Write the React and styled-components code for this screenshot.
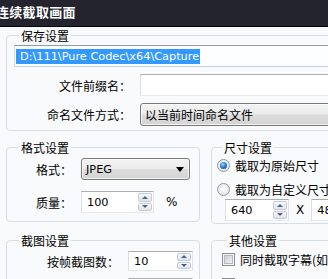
import React from "react";
import styled, { createGlobalStyle } from "styled-components";

const Global = createGlobalStyle`
  html, body { margin: 0; padding: 0; background: #f8fafb; }
  body { font-family: "Noto Sans CJK SC", "Noto Sans", sans-serif; }
`;

const Root = styled.div`
  width: 328px;
  height: 279px;
  overflow: hidden;
  background: #f8fafb;
`;

const Inner = styled.div`
  width: 420px;
  display: flex;
  flex-direction: column;
`;

const TitleBar = styled.div`
  height: 26px;
  background: #23242e;
  border-bottom: 1px solid #050506;
  display: flex;
  align-items: center;
`;

const Title = styled.div`
  margin-left: -4px;
  margin-top: -2px;
  color: #ffffff;
  font-weight: bold;
  font-size: 13px;
  letter-spacing: 0.3px;
  line-height: 16px;
`;

const Body = styled.div`
  padding: 1px 0 0 6px;
  display: flex;
  flex-direction: column;
  gap: 9px;
`;

const Group = styled.fieldset`
  margin: 0;
  padding: ${(p) => p.$pad || "2px 7px 4px 7px"};
  border: 1px solid #d5dfe5;
  border-radius: 4px;
  min-width: 0;
  box-sizing: border-box;
  display: flex;
  flex-direction: column;
  gap: ${(p) => p.$gap || 8}px;
`;

const Legend = styled.legend`
  margin-left: 5px;
  padding: 0 2px;
  font-size: 12px;
  line-height: 15px;
  color: #000;
`;

const Columns = styled.div`
  display: grid;
  grid-template-columns: 194px 1fr;
  column-gap: 11px;
  row-gap: 9px;
  align-items: start;
`;

const Row = styled.div`
  display: grid;
  grid-template-columns: ${(p) => p.$label}px auto auto;
  column-gap: 9px;
  align-items: center;
  justify-content: start;
`;

const Label = styled.span`
  font-size: 12px;
  line-height: 15px;
  text-align: right;
  color: #000;
  white-space: nowrap;
`;

const TextBox = styled.div`
  box-sizing: border-box;
  height: 22px;
  width: ${(p) => (p.$w ? `${p.$w}px` : "100%")};
  background: #fdfeff;
  border: 1px solid;
  border-color: #8e9cab #d6dee6 #c4d2de #d6dee6;
  display: flex;
  align-items: center;
  padding-left: 1px;
  font-family: "DejaVu Sans", sans-serif;
  font-size: 11.3px;
  color: #000;
  white-space: nowrap;
  overflow: hidden;
`;

const PlainBox = styled(TextBox)`
  border-color: #abadb3 #e2e3ea #e3e9ef #dbdfe6;
  background: #ffffff;
`;

const Selected = styled.span`
  background: #3399ff;
  color: #ffffff;
  padding: 1px 1px 1px 4px;
  line-height: 13px;
`;

const DropButton = styled.div`
  box-sizing: border-box;
  height: ${(p) => p.$h || 22}px;
  width: ${(p) => (p.$w ? `${p.$w}px` : "260px")};
  border: 1px solid #7a7a7a;
  border-radius: 3px;
  background: linear-gradient(#f3f3f3 0%, #ebebeb 48%, #dddddd 52%, #d3d3d3 100%);
  box-shadow: inset 0 0 0 1px rgba(255, 255, 255, 0.7);
  display: flex;
  align-items: center;
  justify-content: space-between;
  padding: 0 5px 0 4px;
  font-size: ${(p) => (p.$latin ? "11.3px" : "12px")};
  font-family: ${(p) =>
    p.$latin ? '"DejaVu Sans", sans-serif' : '"Noto Sans CJK SC", sans-serif'};
  color: #000;
  white-space: nowrap;
`;

const Arrow = styled.span`
  width: 0;
  height: 0;
  border-left: 4px solid transparent;
  border-right: 4px solid transparent;
  border-top: 5px solid #000;
  margin-top: 1px;
`;

const SpinField = styled.div`
  box-sizing: border-box;
  height: ${(p) => p.$h}px;
  width: ${(p) => p.$w}px;
  background: #ffffff;
  border: 1px solid;
  border-color: #abadb3 #e2e3ea #e3e9ef #dbdfe6;
  display: flex;
  align-items: center;
  justify-content: space-between;
  padding: 1px 1px 1px 5px;
  font-family: "DejaVu Sans", sans-serif;
  font-size: 11.3px;
  color: #000;
`;

const Spinner = styled.div`
  width: 14px;
  height: 100%;
  display: flex;
  flex-direction: column;
  gap: 1px;
`;

const SpinHalf = styled.div`
  flex: 1;
  border: 1px solid #c3ccd6;
  border-radius: 2px;
  background: linear-gradient(#f6f8fb, #dde4ec);
  display: flex;
  align-items: center;
  justify-content: center;
  &::after {
    content: "";
    width: 0;
    height: 0;
    border-left: 3px solid transparent;
    border-right: 3px solid transparent;
    ${(p) =>
      p.$up
        ? "border-bottom: 3px solid #4d6185;"
        : "border-top: 3px solid #4d6185;"}
  }
`;

const Unit = styled.span`
  font-family: "DejaVu Sans", sans-serif;
  font-size: 12px;
  color: #000;
  margin-left: 3px;
`;

const OptionRow = styled.div`
  display: flex;
  align-items: center;
  gap: 5px;
  font-size: 12px;
  line-height: 15px;
  color: #000;
  white-space: nowrap;
`;

const Radio = styled.span`
  box-sizing: border-box;
  width: 13px;
  height: 13px;
  border-radius: 50%;
  border: 1px solid #8d98a6;
  background: radial-gradient(circle at 50% 40%, #ffffff 0%, #e8ecf0 60%, #c9d0d8 100%);
  display: flex;
  align-items: center;
  justify-content: center;
  &::after {
    content: "";
    display: ${(p) => (p.$on ? "block" : "none")};
    width: 7px;
    height: 7px;
    border-radius: 50%;
    background: radial-gradient(circle at 40% 35%, #9fd6ff 0%, #2d7fc8 45%, #0d3f78 100%);
  }
`;

const Check = styled.span`
  box-sizing: border-box;
  width: 13px;
  height: 13px;
  border: 1px solid #8e8f8f;
  background: #f4f4f4;
  display: flex;
  align-items: center;
  justify-content: center;
  &::after {
    content: "";
    width: 9px;
    height: 9px;
    background: linear-gradient(135deg, #cbcfd5, #f0f1f3);
    border: 1px solid #b6bbc2;
    box-sizing: border-box;
  }
`;

const SizeRow = styled.div`
  display: flex;
  align-items: center;
  gap: 7px;
  padding-left: 8px;
  margin-top: -7px;
  font-family: "DejaVu Sans", sans-serif;
  font-size: 12px;
`;

function Spin({ w, h = 22, value }) {
  return (
    <SpinField $w={w} $h={h}>
      <span>{value}</span>
      <Spinner>
        <SpinHalf $up />
        <SpinHalf />
      </Spinner>
    </SpinField>
  );
}

export default function App() {
  return (
    <Root>
      <Global />
      <Inner>
        <TitleBar>
          <Title>连续截取画面</Title>
        </TitleBar>
        <Body>
          <Group $pad="2px 7px 4px 7px" $gap={7}>
            <Legend>保存设置</Legend>
            <TextBox>
              <Selected>D:\111\Pure Codec\x64\Capture</Selected>
            </TextBox>
            <Row $label={117}>
              <Label>文件前缀名：</Label>
              <PlainBox $w={260} />
            </Row>
            <Row $label={117}>
              <Label>命名文件方式：</Label>
              <DropButton $h={23}>以当前时间命名文件</DropButton>
            </Row>
          </Group>
          <Columns>
            <Group $pad="3px 7px 8px 7px" $gap={11}>
              <Legend>格式设置</Legend>
              <Row $label={58}>
                <Label>格式：</Label>
                <DropButton $w={109} $latin>
                  <span>JPEG</span>
                  <Arrow />
                </DropButton>
              </Row>
              <Row $label={58}>
                <Label>质量：</Label>
                <Spin w={73} value="100" />
                <Unit>%</Unit>
              </Row>
            </Group>
            <Group $pad="3px 7px 2px 5px" $gap={9}>
              <Legend>尺寸设置</Legend>
              <OptionRow>
                <Radio $on />
                截取为原始尺寸
              </OptionRow>
              <OptionRow>
                <Radio />
                截取为自定义尺寸
              </OptionRow>
              <SizeRow>
                <Spin w={64} value="640" />
                <span>X</span>
                <Spin w={64} value="480" />
              </SizeRow>
            </Group>
            <Group $pad="3px 7px 4px 7px" $gap={7}>
              <Legend>截图设置</Legend>
              <Row $label={105}>
                <Label>按帧截图数：</Label>
                <Spin w={65} h={20} value="10" />
              </Row>
              <Row $label={105}>
                <Label>按秒截图数：</Label>
                <Spin w={65} h={20} value="1" />
              </Row>
            </Group>
            <Group $pad="4px 7px 4px 10px" $gap={10}>
              <Legend>其他设置</Legend>
              <OptionRow>
                <Check />
                同时截取字幕(如果有)
              </OptionRow>
              <OptionRow>
                <Check />
                按调整后的比例截取
              </OptionRow>
            </Group>
          </Columns>
        </Body>
      </Inner>
    </Root>
  );
}
